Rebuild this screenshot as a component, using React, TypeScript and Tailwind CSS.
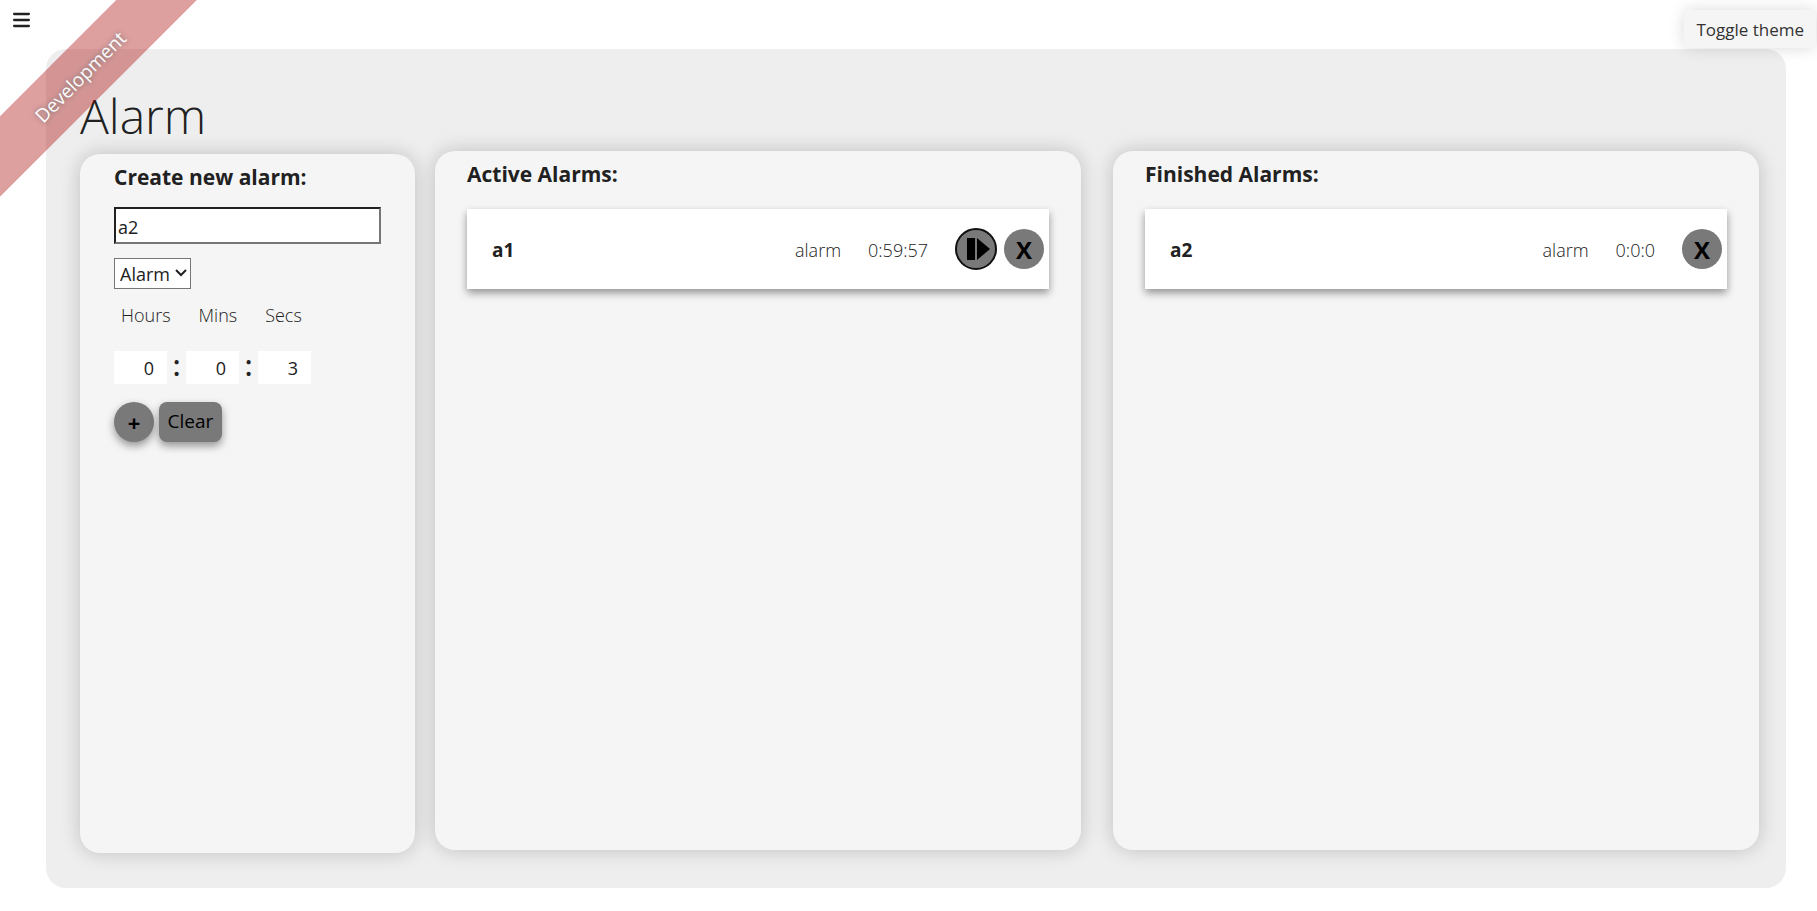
import { useState } from "react";
import { FaBars } from "react-icons/fa6";

type Alarm = { name: string; kind: string; left: string; running: boolean };

const active: Alarm[] = [{ name: "a1", kind: "alarm", left: "0:59:57", running: true }];
const finished: Alarm[] = [{ name: "a2", kind: "alarm", left: "0:0:0", running: false }];

function Ribbon() {
  return (
    <div className="pointer-events-none absolute top-12 -left-[70px] z-50 w-[300px] -rotate-45 bg-[#aa0000]/50 pt-4 pb-3.5 text-center text-[19px] leading-[27px] text-white opacity-75 [text-shadow:0_0_5px_#444]">
      Development
    </div>
  );
}

function AlarmCard({ alarm }: { alarm: Alarm }) {
  return (
    <li className="flex h-20 items-center bg-white pr-[5px] pl-[25px] shadow-[0_4px_8px_rgba(0,0,0,0.4)]">
      <span className="grow pt-0.5 text-[19px] font-bold">{alarm.name}</span>
      <span className="mr-[27px] pt-0.5 text-[18px] font-light">{alarm.kind}</span>
      <span className="mr-[27px] pt-0.5 text-[18px] font-light">{alarm.left}</span>
      {alarm.running && (
        <button
          aria-label="Pause or resume"
          className="mr-[7px] flex size-[42px] items-center justify-center rounded-full border-2 border-[#101010] bg-[#797979]"
        >
          <svg viewBox="0 0 24 24" className="ml-1 size-6" aria-hidden="true">
            <path d="M1 1h8v22H1zM11 1l13 11-13 11z" />
          </svg>
        </button>
      )}
      <button
        aria-label="Remove"
        className="size-10 rounded-full bg-[#797979] pt-0.5 text-[24px] leading-[38px] font-bold text-black"
      >
        X
      </button>
    </li>
  );
}

function AlarmPanel({ title, alarms }: { title: string; alarms: Alarm[] }) {
  return (
    <section className="-mt-[3px] mb-[3px] min-w-0 flex-1 rounded-[20px] bg-[#f5f5f5] px-8 pt-1.5 shadow-[0_0_20px_rgba(0,0,0,0.2)]">
      <h2 className="text-[21px] leading-[34px] font-bold">{title}</h2>
      <ul className="mt-[18px]">
        {alarms.map((a) => (
          <AlarmCard key={a.name} alarm={a} />
        ))}
      </ul>
    </section>
  );
}

function TimeField({ id, initial }: { id: string; initial: string }) {
  const [value, setValue] = useState(initial);
  return (
    <input
      id={id}
      inputMode="numeric"
      value={value}
      onChange={(e) => setValue(e.target.value)}
      className="h-[33px] w-[53px] bg-white pr-[13px] text-right text-[18px]"
    />
  );
}

function Colon() {
  return <span className="w-[19px] pb-[5px] text-center text-[28px] leading-[28px] font-semibold">:</span>;
}

export default function App() {
  const [name, setName] = useState("a2");
  return (
    <div className="relative flex min-h-screen flex-col overflow-hidden bg-white pr-[31px] pb-[23px] pl-[46px] font-['Open_Sans','Noto_Sans',sans-serif] text-[#212121]">
      <Ribbon />
      <button aria-label="Menu" className="absolute top-[10px] left-[13px]">
        <FaBars className="h-5 w-[17px]" />
      </button>
      <button className="absolute top-[10px] right-px z-10 h-[38px] rounded-md bg-[#f5f5f5] px-3 pt-0.5 text-[17px] text-[#333] shadow-[0_0_16px_rgba(0,0,0,0.15)]">
        Toggle theme
      </button>

      <main className="mt-[49px] flex grow flex-col rounded-[20px] bg-[#eee] pr-[27px] pb-[35px] pl-[34px]">
        <h1 className="pt-8 pb-[3px] text-[48px] leading-[70px] font-light">Alarm</h1>
        <div className="flex grow">
          <form
            onSubmit={(e) => e.preventDefault()}
            className="w-[335px] shrink-0 rounded-[20px] bg-[#f5f5f5] px-[34px] pt-1.5 shadow-[0_0_20px_rgba(0,0,0,0.2)]"
          >
            <h2 className="text-[21px] leading-[34px] font-bold">Create new alarm:</h2>
            <input
              aria-label="Alarm name"
              value={name}
              onChange={(e) => setName(e.target.value)}
              className="mt-[13px] block h-[37px] w-full border-2 border-t-[#212121] border-r-[#767676] border-b-[#767676] border-l-[#212121] bg-white px-[2px] pt-0.5 text-[18px]"
            />
            <div className="relative mt-[14px] w-[77px]">
              <select
                aria-label="Alarm type"
                className="block h-[31px] w-full appearance-none border border-[#767676] bg-white pt-0.5 pl-[5px] text-[18px] leading-[27px]"
              >
                <option>Alarm</option>
                <option>Timer</option>
              </select>
              <svg
                viewBox="0 0 12 8"
                className="pointer-events-none absolute top-[11px] right-1 h-2 w-3"
                fill="none"
                stroke="#212121"
                strokeWidth="2"
                aria-hidden="true"
              >
                <path d="M1 1l5 5 5-5" />
              </svg>
            </div>
            <div className="mt-3 flex gap-7 pl-[7px] text-[18px] leading-[28px] font-light">
              <label htmlFor="hours">Hours</label>
              <label htmlFor="mins">Mins</label>
              <label htmlFor="secs">Secs</label>
            </div>
            <div className="mt-[22px] flex items-end">
              <TimeField id="hours" initial="0" />
              <Colon />
              <TimeField id="mins" initial="0" />
              <Colon />
              <TimeField id="secs" initial="3" />
            </div>
            <div className="mt-[18px] flex gap-[5px]">
              <button
                aria-label="Add alarm"
                className="size-10 rounded-full bg-[#797979] text-[22px] leading-[38px] font-bold text-black shadow-[0_4px_8px_rgba(0,0,0,0.4)]"
              >
                +
              </button>
              <button
                type="reset"
                className="h-10 w-[63px] rounded-lg bg-[#797979] pb-0.5 text-[19px] leading-[38px] text-black shadow-[0_4px_8px_rgba(0,0,0,0.4)]"
              >
                Clear
              </button>
            </div>
          </form>
          <div className="ml-5 flex grow gap-8">
            <AlarmPanel title="Active Alarms:" alarms={active} />
            <AlarmPanel title="Finished Alarms:" alarms={finished} />
          </div>
        </div>
      </main>
    </div>
  );
}
